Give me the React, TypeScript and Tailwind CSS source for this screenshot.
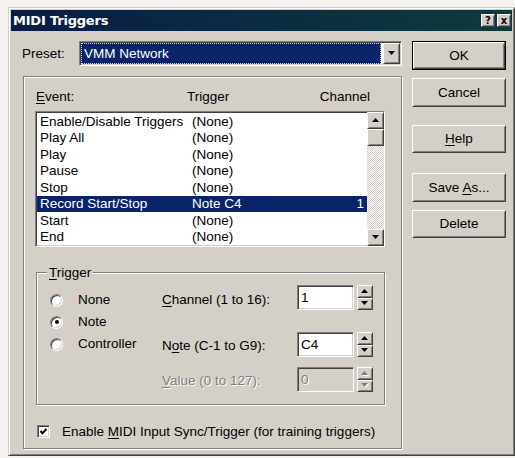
import React from "react";

type Kids = { children?: React.ReactNode };

// Classic 3D bevels
const raised =
  "border border-t-white border-l-white border-r-[#404040] border-b-[#404040] shadow-[inset_1px_1px_0_#d4d0c8,inset_-1px_-1px_0_#808080]";
const sunken =
  "border border-t-[#808080] border-l-[#808080] border-r-white border-b-white shadow-[inset_1px_1px_0_#404040,inset_-1px_-1px_0_#d4d0c8]";
const etched = "border border-[#808080] shadow-[inset_1px_1px_0_#fff,1px_1px_0_#fff]";
const disabledText = "text-[#808080] [text-shadow:1px_1px_0_#fff]";

function Key({ children }: Kids) {
  return <span className="underline decoration-1 underline-offset-2">{children}</span>;
}

function Arrow({ dir, disabled }: { dir: "up" | "down"; disabled?: boolean }) {
  const pts = dir === "up" ? "3.5,0 7,4 0,4" : "0,0 7,0 3.5,4";
  const shadow = dir === "up" ? "4.5,1 8,5 1,5" : "1,1 8,1 4.5,5";
  return (
    <svg width="8" height="5" viewBox="0 0 8 5">
      {disabled && <polygon points={shadow} fill="#fff" />}
      <polygon points={pts} fill={disabled ? "#808080" : "#000"} />
    </svg>
  );
}

function PushButton({
  children,
  isDefault,
  className,
}: Kids & { isDefault?: boolean; className: string }) {
  const face = (
    <div className={`${raised} h-full w-full bg-[#d4d0c8] flex items-center justify-center`}>
      {children}
    </div>
  );
  return isDefault ? (
    <div className={`border border-black ${className}`}>{face}</div>
  ) : (
    <div className={className}>{face}</div>
  );
}

function Spinner({ disabled }: { disabled?: boolean }) {
  return (
    <div className="ml-[3px] w-[16px] h-[25px] flex flex-col">
      <div className={`${raised} flex-1 bg-[#d4d0c8] flex items-center justify-center`}>
        <Arrow dir="up" disabled={disabled} />
      </div>
      <div className={`${raised} flex-1 bg-[#d4d0c8] flex items-center justify-center`}>
        <Arrow dir="down" disabled={disabled} />
      </div>
    </div>
  );
}

function Field({ value, disabled }: { value: string; disabled?: boolean }) {
  return (
    <div
      className={`${sunken} w-[57px] h-[25px] flex items-center pl-[3px] ${
        disabled ? `bg-[#d4d0c8] ${disabledText}` : "bg-white"
      }`}
    >
      {value}
    </div>
  );
}

function Radio({ checked, label }: { checked?: boolean; label: string }) {
  return (
    <div className="h-[22px] flex items-center">
      <div className="w-[13px] h-[13px] rounded-full border border-t-[#808080] border-l-[#808080] border-r-white border-b-white bg-white shadow-[inset_1px_1px_0_#404040,inset_-1px_-1px_0_#d4d0c8] flex items-center justify-center">
        {checked && <div className="w-[4px] h-[4px] rounded-full bg-black" />}
      </div>
      <span className="ml-[15px]">{label}</span>
    </div>
  );
}

const events: [string, string, string][] = [
  ["Enable/Disable Triggers", "(None)", ""],
  ["Play All", "(None)", ""],
  ["Play", "(None)", ""],
  ["Pause", "(None)", ""],
  ["Stop", "(None)", ""],
  ["Record Start/Stop", "Note C4", "1"],
  ["Start", "(None)", ""],
  ["End", "(None)", ""],
];

function ScrollBar() {
  return (
    <div className="w-[17px] h-full flex flex-col bg-[image:repeating-conic-gradient(#d4d0c8_0_25%,#fff_0_50%)] bg-[length:2px_2px]">
      <div className={`${raised} h-[17px] bg-[#d4d0c8] flex items-center justify-center`}>
        <Arrow dir="up" />
      </div>
      <div className={`${raised} h-[17px] bg-[#d4d0c8]`} />
      <div className="flex-1" />
      <div className={`${raised} h-[17px] bg-[#d4d0c8] flex items-center justify-center`}>
        <Arrow dir="down" />
      </div>
    </div>
  );
}

function EventList() {
  return (
    <div className={`${sunken} w-[350px] h-[136px] bg-white flex`}>
      <div className="flex-1 pt-[1px] pl-[1px]">
        {events.map(([name, trig, ch]) => {
          const sel = ch !== "";
          return (
            <div
              key={name}
              className={`h-[16.5px] flex items-center ${
                sel ? "bg-[#0a246a] text-white" : "text-black"
              }`}
            >
              <span className="w-[155px] pl-[3px] whitespace-nowrap">{name}</span>
              <span className="flex-1">{trig}</span>
              <span className="pr-[3px]">{ch}</span>
            </div>
          );
        })}
      </div>
      <ScrollBar />
    </div>
  );
}

export default function App() {
  return (
    <div className="w-[515px] h-[458px] bg-[#f4f3f0] pt-[7px] pl-[8px] font-['Liberation_Sans',Arial,sans-serif] text-[13.5px] leading-none text-black">
      <div className="w-[507px] h-[449px] bg-[#d4d0c8] p-[2px] border border-t-[#d4d0c8] border-l-[#d4d0c8] border-r-[#404040] border-b-[#404040] shadow-[inset_1px_1px_0_#fff,inset_-1px_-1px_0_#808080]">
        {/* caption */}
        <div className="h-[21px] flex items-center bg-linear-to-r from-[#0a1c46] to-[#0e3a3d] pl-[2px] pr-[1px]">
          <span className="text-white font-bold text-[13px] font-['DejaVu_Sans',sans-serif] tracking-[-0.2px]">
            MIDI Triggers
          </span>
          <div className="ml-auto flex gap-[2px]">
            <div className={`${raised} w-[14px] h-[13px] bg-[#d4d0c8] flex items-center justify-center text-[10px] font-bold font-['DejaVu_Sans',sans-serif]`}>
              ?
            </div>
            <div className={`${raised} w-[14px] h-[13px] bg-[#d4d0c8] flex items-center justify-center text-[10px] font-bold font-['DejaVu_Sans',sans-serif]`}>
              x
            </div>
          </div>
        </div>

        <div className="flex pl-[12px] pt-[10px]">
          {/* left column */}
          <div className="w-[379px] flex flex-col">
            <div className="h-[25px] flex items-center">
              <span className="w-[57px] -ml-[1px]">Preset:</span>
              <div className={`${sunken} flex-1 h-[25px] bg-white flex p-[1px]`}>
                <div className="flex-1 mr-[2px] bg-[#0a246a] border border-dotted border-[#d8d8b0] flex items-center pl-[2px] text-white">
                  VMM Network
                </div>
                <div className={`${raised} w-[17px] bg-[#d4d0c8] flex items-center justify-center`}>
                  <Arrow dir="down" />
                </div>
              </div>
            </div>

            <div className={`${etched} mt-[10px] h-[373px] pl-[11px] flex flex-col`}>
              <div className="h-[34px] pt-[6px] flex items-center w-[335px]">
                <span className="w-[152px] pl-[1px]">
                  <Key>E</Key>vent:
                </span>
                <span>Trigger</span>
                <span className="ml-auto">Channel</span>
              </div>

              <EventList />

              <div className={`${etched} relative mt-[25px] ml-[1px] w-[349px] h-[133px] flex`}>
                <span className="absolute left-[10px] -top-[7px] px-[2px] bg-[#d4d0c8]">
                  <Key>T</Key>rigger
                </span>
                <div className="w-[125px] pt-[16px] pl-[13px] flex flex-col">
                  <Radio label="None" />
                  <Radio label="Note" checked />
                  <Radio label="Controller" />
                </div>
                <div className="flex flex-col pt-[12px]">
                  <div className="h-[25px] flex items-center">
                    <span className="w-[135px] pt-[4px]">
                      <Key>C</Key>hannel (1 to 16):
                    </span>
                    <Field value="1" />
                    <Spinner />
                  </div>
                  <div className="mt-[22px] h-[25px] flex items-center">
                    <span className="w-[135px] pt-[3px]">
                      N<Key>o</Key>te (C-1 to G9):
                    </span>
                    <Field value="C4" />
                    <Spinner />
                  </div>
                  <div className="mt-[10px] h-[25px] flex items-center">
                    <span className={`w-[135px] pt-[2px] ${disabledText}`}>
                      <Key>V</Key>alue (0 to 127):
                    </span>
                    <Field value="0" disabled />
                    <Spinner disabled />
                  </div>
                </div>
              </div>

              <div className="mt-[20px] h-[13px] flex items-center">
                <div className={`${sunken} ml-[2px] w-[13px] h-[13px] bg-white flex items-center justify-center`}>
                  <svg width="7" height="7" viewBox="0 0 7 7">
                    <polyline points="0.5,3 2.5,5.2 6.5,1" fill="none" stroke="#000" strokeWidth="2" />
                  </svg>
                </div>
                <span className="ml-[12px] whitespace-nowrap">
                  Enable <Key>M</Key>IDI Input Sync/Trigger (for training triggers)
                </span>
              </div>
            </div>
          </div>

          {/* right column */}
          <div className="ml-[10px] w-[94px] flex flex-col">
            <PushButton isDefault className="h-[29px]">OK</PushButton>
            <PushButton className="mt-[8px] h-[29px]">Cancel</PushButton>
            <PushButton className="mt-[18px] h-[28px]">
              <span>
                <Key>H</Key>elp
              </span>
            </PushButton>
            <PushButton className="mt-[20px] h-[29px]">
              <span>
                Save <Key>A</Key>s...
              </span>
            </PushButton>
            <PushButton className="mt-[8px] h-[28px]">Delete</PushButton>
          </div>
        </div>
      </div>
    </div>
  );
}
